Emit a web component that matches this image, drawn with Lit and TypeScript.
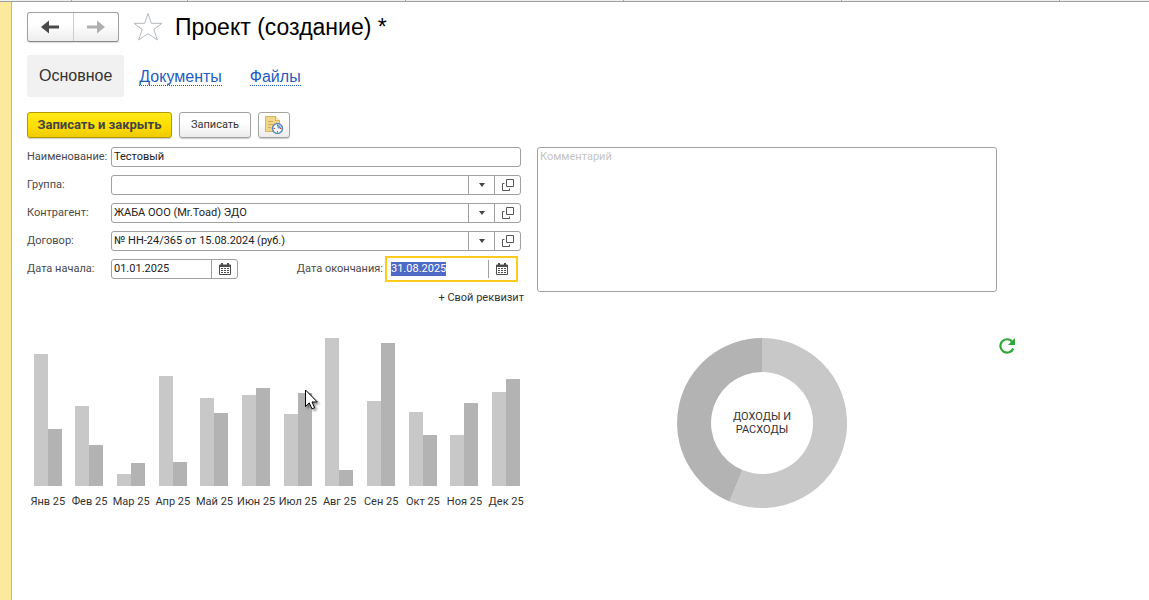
import { LitElement, html, svg, css } from "lit";
import { customElement } from "lit/decorators.js";

interface Month { name: string; income: number; expense: number; }

const MONTHS: Month[] = [
  { name: "Янв 25", income: 132, expense: 57 },
  { name: "Фев 25", income: 80, expense: 41 },
  { name: "Мар 25", income: 12, expense: 23 },
  { name: "Апр 25", income: 110, expense: 24 },
  { name: "Май 25", income: 88, expense: 73 },
  { name: "Июн 25", income: 91, expense: 98 },
  { name: "Июл 25", income: 72, expense: 93 },
  { name: "Авг 25", income: 148, expense: 16 },
  { name: "Сен 25", income: 85, expense: 143 },
  { name: "Окт 25", income: 74, expense: 51 },
  { name: "Ноя 25", income: 51, expense: 83 },
  { name: "Дек 25", income: 94, expense: 107 },
];

const calendarIcon = html`<svg width="12" height="12" viewBox="0 0 12 12" aria-hidden="true">
  <path fill="#4d4d4d" d="M0 2.500q0-1 1-1h1V0h2v1.500h4V0h2v1.500h1q1 0 1 1V11q0 1-1 1H1q-1 0-1-1z"/>
  <path fill="#fff" d="M1 4h10v7H1z"/>
  <path fill="#4d4d4d" d="M2 5h2v1H2zM5 5h2v1H5zM8 5h2v1H8zM2 7h2v1H2zM5 7h2v1H5zM8 7h2v1H8zM2 9h2v1H2zM5 9h2v1H5zM8 9h2v1H8z"/>
</svg>`;

const openIcon = html`<svg width="12" height="12" viewBox="0 0 12 12" aria-hidden="true">
  <path fill="none" stroke="#555" d="M4.500 .5h7v7h-7zM2.500 4.500h-2v7h7v-2"/>
</svg>`;

const arrowIcon = html`<svg width="6" height="4" viewBox="0 0 6 4" aria-hidden="true"><path fill="#444" d="M0 0h6L3 4z"/></svg>`;

@customElement("app-root")
export class AppRoot extends LitElement {
  static styles = css`
    :host { display: block; font: 11px/14px Roboto, "Liberation Sans", sans-serif; color: #333; }
    * { box-sizing: border-box; }
    button, input, textarea { font: inherit; color: inherit; margin: 0; }
    button { padding: 0; display: flex; align-items: center; justify-content: center; }
    .page { position: relative; display: flex; flex-direction: column; min-height: 100vh; background: #fff; }
    .strip { display: flex; height: 2px; background: #f0f0f0; border-bottom: 1px solid #a0a0a0; }
    .strip i { flex: 0 0 218px; border-right: 1px solid #a0a0a0; }
    .strip i:first-child { flex-basis: 72px; }
    .strip i:nth-child(2) { flex-basis: 116px; }
    .body { flex: 1; border-left: 11px solid #fbea9c; display: flex; }
    .content { flex: 1; min-width: 0; border-left: 1px solid #c5b97c; padding: 10px 15px; }
    .head { display: flex; align-items: center; height: 30px; }
    .history { display: flex; width: 92px; height: 30px; border: 1px solid #a0a0a0; border-bottom-color: #888; border-radius: 3px; background: linear-gradient(#fff 40%, #ededed); box-shadow: 0 1px 1px #ddd; }
    .history button { flex: 1; border: 0; background: none; }
    .history button + button { border-left: 1px solid #ccc; }
    .star { width: 30px; height: 30px; border: 0; background: none; margin: 0 12px 0 14px; }
    h1 { margin: 0; font: 23px/30px "Liberation Sans", sans-serif; color: #000; }
    .tabs { display: flex; align-items: center; height: 42px; margin-top: 13px; font: 16px/18px "Liberation Sans", sans-serif; }
    .tabs a { color: #1f5cc0; text-decoration: none; border-bottom: 1px dotted #1f5cc0; line-height: 17px; margin: 2px 0 0 28px; }
    .tabs a.current { color: #333; background: #f1f1f1; border: 0; border-radius: 3px; padding: 0 12px; line-height: 42px; margin: 0 -13px 0 0; }
    .tools { display: flex; gap: 7px; margin-top: 15px; height: 26px; }
    .tools button { border: 1px solid #a3a3a3; border-radius: 3px; background: linear-gradient(#fff 40%, #ececec); box-shadow: 0 1px 1px #ccc; width: 72px; }
    .tools .primary { width: 145px; font-weight: 700; font-size: 13px; color: #444; border-color: #b39a00; background: linear-gradient(#ffe91a, #ffe000 50%, #eecb00); }
    .tools .journal { width: 32px; }
    .form { display: grid; grid-template-columns: minmax(0, 497px) minmax(0, 460px); gap: 13px; margin-top: 9px; }
    .fields { display: flex; flex-direction: column; gap: 8px; }
    .row { display: flex; align-items: center; height: 20px; padding-right: 3px; }
    .row label { flex: 0 0 84px; color: #4a4a4a; white-space: nowrap; }
    .field { flex: 1; min-width: 0; display: flex; height: 20px; border: 1px solid #a0a0a0; border-radius: 3px; background: #fff; }
    .field input { flex: 1; min-width: 0; width: 0; border: 0; outline: 0; background: none; padding: 0 2px; color: #222; }
    .field button { flex: 0 0 26px; border: 0; border-left: 1px solid #a0a0a0; background: none; }
    .field.date { flex: 0 0 127px; }
    .row label.end { flex: 1; text-align: right; padding-right: 5px; }
    .field.active { border-color: transparent; border-radius: 0; margin-right: 6px; outline: 2px solid #fccb1c; outline-offset: 1px; }
    .active input::selection { background: #4f69c6; color: #fff; }
    .custom { align-self: flex-end; border: 0; background: none; line-height: 14px; margin-top: 4px; }
    textarea { height: 145px; border: 1px solid #a0a0a0; border-radius: 3px; padding: 2px; resize: none; outline: 0; display: block; width: 100%; }
    textarea::placeholder { color: #c4c4c4; opacity: 1; }
    .charts { display: grid; grid-template-columns: minmax(0, 500px) minmax(0, 470px) 20px; margin-top: 33px; align-items: start; }
    .months { display: grid; grid-template-columns: repeat(12, minmax(0, 1fr)); text-align: center; white-space: nowrap; }
    .bars { display: flex; align-items: flex-end; justify-content: center; height: 148px; margin-bottom: 9px; }
    .bar { width: 14px; background: #c8c8c8; }
    .bar.expense { background: #b3b3b3; }
    .month { display: flex; flex-direction: column; align-items: center; }
    .donut { display: grid; place-items: center; margin: 0; }
    .donut > * { grid-area: 1 / 1; }
    .donut figcaption { width: 80px; text-align: center; line-height: 13px; }
    .refresh { border: 0; background: none; width: 20px; height: 16px; }
    .pointer { position: absolute; left: 305px; top: 389px; filter: drop-shadow(2px 2px 1px #0006); pointer-events: none; }
  `;

  firstUpdated() {
    const end = this.renderRoot.querySelector<HTMLInputElement>("#end");
    end?.focus();
    end?.select();
  }

  private lookup(id: string, label: string, value: string) {
    return html`<div class="row">
      <label for=${id}>${label}</label>
      <div class="field">
        <input id=${id} type="text" .value=${value}>
        <button aria-label="Выбрать">${arrowIcon}</button>
        <button aria-label="Открыть">${openIcon}</button>
      </div>
    </div>`;
  }

  private arrow(color: string, flip: boolean) {
    return html`<svg width="18" height="14" viewBox="0 0 18 14" aria-hidden="true">
      ${svg`<path fill=${color} transform=${flip ? "translate(18 0) scale(-1 1)" : ""} d="M0 7l8-6.500v5h10v3H8v5z"/>`}
    </svg>`;
  }

  render() {
    return html`<div class="page">
      <div class="strip"><i></i><i></i><i></i><i></i><i></i><i></i></div>
      <div class="body"><main class="content">
        <header class="head">
          <div class="history">
            <button aria-label="Назад">${this.arrow("#4a4a4a", false)}</button>
            <button aria-label="Вперед">${this.arrow("#b0b0b0", true)}</button>
          </div>
          <button class="star" aria-label="В избранное">
            <svg width="30" height="30" viewBox="0 0 30 30"><path fill="#fff" stroke="#b5bac0" d="M15 1.500l3.300 9.800H29l-8.300 6.200L24.500 28 15 21.700 5.500 28l3.800-10.500L1 11.300h10.700z"/></svg>
          </button>
          <h1>Проект (создание) *</h1>
        </header>
        <nav class="tabs">
          <a class="current" href="#main">Основное</a>
          <a href="#docs">Документы</a>
          <a href="#files">Файлы</a>
        </nav>
        <div class="tools">
          <button class="primary">Записать и закрыть</button>
          <button>Записать</button>
          <button class="journal" aria-label="Журнал">
            <svg width="20" height="20" viewBox="0 0 20 20">
              <path fill="#f2d68a" stroke="#d9b45c" d="M1.500 1.500h10l4 4v11h-14z"/>
              <path fill="#fff2c4" stroke="#d9b45c" d="M11.500 1.500v4h4"/>
              <path stroke="#d3ac55" d="M4 6.500h5M4 9.500h5M4 12.500h3"/>
              <circle cx="13.500" cy="13.500" r="5" fill="#fff" stroke="#5c88bd" stroke-width="1.500"/>
              <path fill="#6d9bd0" d="M13.500 13.500V10a3.500 3.500 0 0 1 3.500 3.500z"/>
              <path stroke="#e23b2e" d="M13.500 9.500V11M13.500 16v1.500M9.500 13.500H11M16 13.500h1.500"/>
            </svg>
          </button>
        </div>
        <div class="form">
          <div class="fields">
            <div class="row">
              <label for="name">Наименование:</label>
              <div class="field"><input id="name" type="text" .value=${"Тестовый"}></div>
            </div>
            ${this.lookup("group", "Группа:", "")}
            ${this.lookup("partner", "Контрагент:", "ЖАБА ООО (Mr.Toad) ЭДО")}
            ${this.lookup("contract", "Договор:", "№ НН-24/365 от 15.08.2024 (руб.)")}
            <div class="row">
              <label for="start">Дата начала:</label>
              <div class="field date">
                <input id="start" type="text" .value=${"01.01.2025"}>
                <button aria-label="Календарь">${calendarIcon}</button>
              </div>
              <label class="end" for="end">Дата окончания:</label>
              <div class="field date active">
                <input id="end" type="text" .value=${"31.08.2025"}>
                <button aria-label="Календарь">${calendarIcon}</button>
              </div>
            </div>
            <button class="custom">+ Свой реквизит</button>
          </div>
          <textarea aria-label="Комментарий" placeholder="Комментарий"></textarea>
        </div>
        <section class="charts">
          <div class="months">
            ${MONTHS.map((m) => html`<div class="month">
              <div class="bars">
                <div class="bar" style="height:${m.income}px"></div>
                <div class="bar expense" style="height:${m.expense}px"></div>
              </div>
              <span>${m.name}</span>
            </div>`)}
          </div>
          <figure class="donut">
            <svg width="170" height="170" viewBox="-85 -85 170 170" aria-hidden="true">
              <path fill="#c8c8c8" d="M0-85A85 85 0 1 1-32.500 78.500L-19.500 47.100A51 51 0 1 0 0-51z"/>
              <path fill="#b3b3b3" d="M0-85A85 85 0 0 0-32.500 78.500L-19.500 47.100A51 51 0 0 1 0-51z"/>
            </svg>
            <figcaption>ДОХОДЫ И РАСХОДЫ</figcaption>
          </figure>
          <button class="refresh" aria-label="Обновить">
            <svg width="16" height="16" viewBox="0 0 16 16"><path fill="none" stroke="#2fa836" stroke-width="2.200" d="M13 3.400A6.700 6.700 0 1 0 14.300 10.500"/><path fill="#2fa836" d="M16 0v7H9z"/></svg>
          </button>
        </section>
      </main></div>
      <svg class="pointer" width="14" height="22" viewBox="0 0 14 22" aria-hidden="true">
        <path fill="#fff" stroke="#000" d="M.500 1v16.500l3.800-3.600 2.700 6 2.600-1.200-2.600-5.700h5.300z"/>
      </svg>
    </div>`;
  }
}
